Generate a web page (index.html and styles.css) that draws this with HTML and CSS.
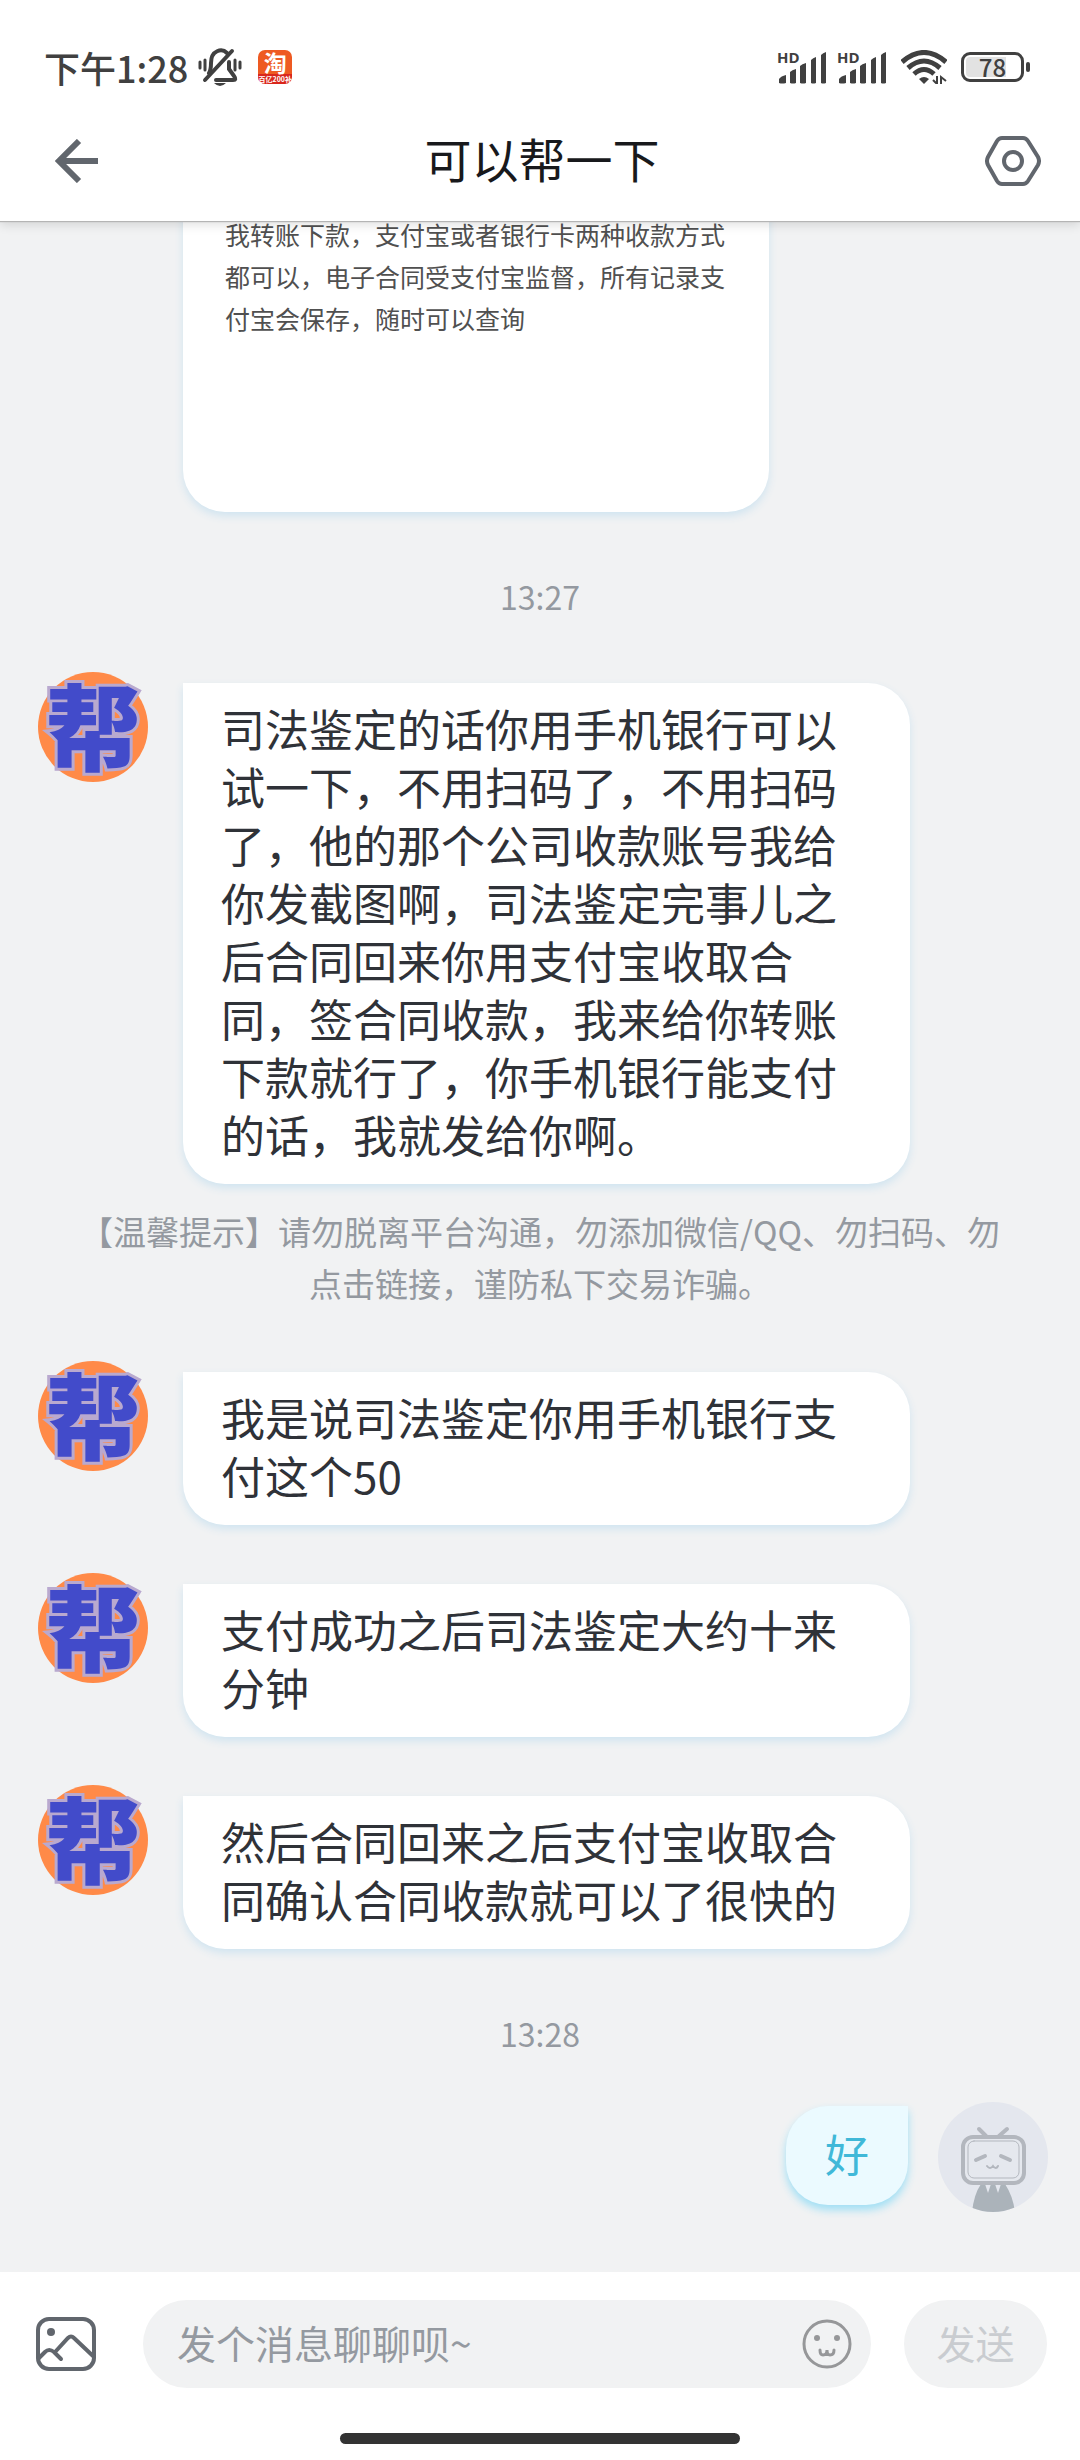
FILE: index.html
```
<!DOCTYPE html>
<html lang="zh-CN">
<head>
<meta charset="utf-8">
<meta name="viewport" content="width=device-width, initial-scale=1">
<title>可以帮一下</title>
<link rel="stylesheet" href="styles.css">
</head>
<body>
<svg class="defs" aria-hidden="true">
  <symbol id="signal" viewBox="0 0 50 34">
    <path d="M2 33V29Q4 26 9 25V33Q5 34 2 33ZM13 33V22Q15 20 19 19V33Q16 34 13 33ZM23 33V16Q25 14 29 13V33Q26 34 23 33ZM34 33V10Q36 8 39 7V33Q36 34 34 33ZM44 33V5Q46 3 49 2V33Q46 34 44 33Z" fill="#404040"/>
  </symbol>
</svg>
<div class="app">
  <header class="top">
    <div class="status">
      <span class="clock">下午1:28</span>
      <svg class="mute" viewBox="0 0 44 38" fill="none" stroke="#404040" stroke-width="4" stroke-linecap="round">
        <path d="M7 32L34 3"/>
        <path d="M11 25Q13 22 13 15C13 2 24 0 29 5"/>
        <path d="M18 32H35Q39 32 36 28L31 21V14"/>
        <path d="M16 35H28Q22 41 16 35Z" fill="#404040" stroke="none"/>
        <path d="M2 14V20M7 12V22M37 12V22M42 14V20" stroke-width="3"/>
      </svg>
      <span class="shop"><b>淘</b><i>百亿200补</i></span>
      <span class="space"></span>
      <span class="sim"><small>HD</small><svg viewBox="0 0 50 34"><use href="#signal"/></svg></span>
      <span class="sim"><small>HD</small><svg viewBox="0 0 50 34"><use href="#signal"/></svg></span>
      <svg class="wifi" viewBox="0 0 46 34" fill="none" stroke="#404040" stroke-width="5">
        <path d="M1 12Q23-7 45 12M7 18Q23 4 39 18M13 24Q23 15 33 24"/>
        <path d="M18 29Q23 25 28 29L23 34Z" fill="#404040" stroke="none"/>
        <path d="M36 26V34L32 30M40 34V27L45 31" stroke-width="2"/>
      </svg>
      <span class="battery"><span class="cell">78</span><span class="tip"></span></span>
    </div>
    <div class="nav">
      <button class="icon-btn" aria-label="返回">
        <svg width="44" height="44" viewBox="0 0 44 44" fill="none" stroke="#61666d" stroke-width="6"><path d="M43 22H4M24 2L4 22L24 42"/></svg>
      </button>
      <h1>可以帮一下</h1>
      <button class="icon-btn" aria-label="设置">
        <svg width="56" height="50" viewBox="0 0 56 50" fill="none" stroke="#61666d" stroke-width="4"><path d="M17 2H38Q41 2 43 5L53 21Q55 25 53 29L43 45Q41 48 38 48H17Q14 48 12 45L3 29Q1 25 3 21L12 5Q14 2 17 2Z"/><circle cx="28" cy="25" r="9"/></svg>
      </button>
    </div>
  </header>

  <main class="chat">
    <article class="card">我转账下款，支付宝或者银行卡两种收款方式都可以，电子合同受支付宝监督，所有记录支付宝会保存，随时可以查询</article>
    <time class="time">13:27</time>
    <div class="msg">
      <span class="avatar">帮</span>
      <p class="bubble">司法鉴定的话你用手机银行可以试一下，不用扫码了，不用扫码了，他的那个公司收款账号我给你发截图啊，司法鉴定完事儿之后合同回来你用支付宝收取合同，签合同收款，我来给你转账下款就行了，你手机银行能支付的话，我就发给你啊。</p>
    </div>
    <p class="notice">【温馨提示】请勿脱离平台沟通，勿添加微信/QQ、勿扫码、勿点击链接，谨防私下交易诈骗。</p>
    <div class="msg">
      <span class="avatar">帮</span>
      <p class="bubble">我是说司法鉴定你用手机银行支付这个50</p>
    </div>
    <div class="msg">
      <span class="avatar">帮</span>
      <p class="bubble">支付成功之后司法鉴定大约十来分钟</p>
    </div>
    <div class="msg">
      <span class="avatar">帮</span>
      <p class="bubble">然后合同回来之后支付宝收取合同确认合同收款就可以了很快的</p>
    </div>
    <time class="time">13:28</time>
    <div class="msg mine">
      <p class="bubble">好</p>
      <svg class="me" viewBox="0 0 110 110" role="img" aria-label="我的头像">
        <defs><clipPath id="disc"><circle cx="55" cy="55" r="55"/></clipPath></defs>
        <g clip-path="url(#disc)">
          <rect width="110" height="110" fill="#e4e7ee"/>
          <path d="M34 110Q36 92 43 82H47L50 91L53 82H57L60 91L63 82H67Q75 94 77 110Z" fill="#abb3ba"/>
          <g fill="none" stroke="#b3b7be" stroke-linecap="round">
            <path d="M41 27L48 34M69 27L61 34" stroke-width="4"/>
            <rect x="25" y="35" width="61" height="46" rx="10" fill="#e5e8ee" stroke-width="4"/>
            <rect x="30" y="39" width="51" height="37" rx="6" stroke-width="1"/>
            <path d="M38 58L47 54M63 54L72 58" stroke-width="4"/>
            <path d="M49 64Q52 68 55 64Q58 68 60 64" stroke-width="2"/>
          </g>
        </g>
      </svg>
    </div>
  </main>

  <footer class="bottom">
    <form class="composer">
      <button type="button" class="icon-btn" aria-label="图片">
        <svg width="60" height="56" viewBox="0 0 60 56" fill="none" stroke="#61666d" stroke-width="4" stroke-linecap="round"><rect x="2" y="3" width="56" height="50" rx="11"/><path d="M3 42L9 36Q13 32 18 36L25 43M20 35L32 22Q35 19 38 22L57 40"/><circle cx="15" cy="16" r="4" fill="#61666d" stroke="none"/></svg>
      </button>
      <div class="field">
        <input type="text" aria-label="消息" placeholder="发个消息聊聊呗~">
        <button type="button" class="icon-btn" aria-label="表情">
          <svg width="50" height="50" viewBox="0 0 50 50" fill="none" stroke="#969799" stroke-width="3" stroke-linecap="round"><circle cx="25" cy="25" r="23"/><path d="M18 31Q18 36 21 36Q25 36 25 31Q25 36 28 36Q32 36 32 31"/><g fill="#969799" stroke="none"><circle cx="15" cy="19" r="3"/><circle cx="35" cy="19" r="3"/></g></svg>
        </button>
      </div>
      <button type="submit" class="send" disabled>发送</button>
    </form>
    <div class="home"></div>
  </footer>
</div>
</body>
</html>
```
FILE: styles.css
```
* { box-sizing: border-box; }
body {
  margin: 0;
  background: #f1f2f3;
  font-family: "Noto Sans CJK SC", sans-serif;
  color: #2f3238;
}
h1, p { margin: 0; font-weight: 400; }
button, input { font: inherit; border: 0; background: none; padding: 0; }
.defs { position: absolute; width: 0; height: 0; }
.app { display: flex; flex-direction: column; min-height: 100vh; }

.top {
  position: relative;
  z-index: 1;
  background: #fff;
  box-shadow: 0 1px 1px #b4b4b4, 0 4px 10px rgba(0, 0, 0, .12);
}
.status {
  display: flex;
  align-items: center;
  gap: 10px;
  height: 100px;
  padding: 34px 50px 0 44px;
  color: #404040;
}
.clock { font-size: 36px; line-height: 64px; font-weight: 500; }
.mute { width: 44px; height: 38px; }
.shop {
  display: flex;
  flex-direction: column;
  align-items: center;
  width: 34px;
  height: 34px;
  margin-left: 6px;
  border-radius: 7px;
  background: linear-gradient(#ee5a22 0 70%, #d9261c 70%);
  color: #fff;
}
.shop b { font-size: 23px; line-height: 25px; }
.shop i { font: 700 7px/8px "Noto Sans CJK SC", sans-serif; white-space: nowrap; }
.space { flex: 1; }
.sim { display: grid; width: 50px; height: 34px; }
.sim small, .sim svg { grid-area: 1 / 1; }
.sim small { font: 700 15px/14px "Open Sans", sans-serif; }
.sim svg { width: 50px; height: 34px; }
.wifi { width: 46px; height: 34px; margin: 0 4px; }
.battery { display: flex; align-items: center; gap: 2px; }
.cell {
  width: 63px;
  height: 30px;
  border: 3px solid #404040;
  border-radius: 9px;
  background: linear-gradient(90deg, #e2e2e2 75%, #fff 75%) content-box;
  padding: 2px;
  font: 500 24px/20px "Noto Sans CJK SC", sans-serif;
  text-align: center;
}
.tip { width: 4px; height: 10px; border-radius: 2px; background: #404040; }

.nav {
  display: flex;
  align-items: center;
  justify-content: space-between;
  height: 121px;
  padding: 0 39px 0 55px;
}
.nav h1 { padding-bottom: 6px; font-size: 47px; line-height: 64px; color: #18191c; }
.icon-btn { display: flex; }

.chat { flex: 1; display: flex; flex-direction: column; }
.card {
  width: 586px;
  height: 299px;
  margin: -8px 0 48px 183px;
  padding: 0 42px;
  border-radius: 0 0 42px 42px;
  background: #fff;
  box-shadow: 0 4px 8px #d0e4f0;
  font-size: 25px;
  line-height: 42px;
  color: #505050;
}
.time {
  margin: 12px 0 52px;
  font-size: 32px;
  line-height: 48px;
  text-align: center;
  color: #9499a0;
}
.msg {
  display: flex;
  align-items: flex-start;
  gap: 35px;
  padding: 0 32px 0 38px;
  margin-bottom: 48px;
}
.avatar {
  flex: none;
  width: 110px;
  height: 110px;
  border-radius: 50%;
  background: #ff8a48;
  color: #424bca;
  font-size: 94px;
  font-weight: 900;
  line-height: 102px;
  text-align: center;
  -webkit-text-stroke: 6px #b9a9cf;
  paint-order: stroke fill;
}
.bubble {
  max-width: 727px;
  margin-top: 11px;
  padding: 16px 38px 21px;
  border-radius: 0 42px 42px 42px;
  background: #fff;
  box-shadow: 0 4px 8px #d0e4f0;
  font-size: 44px;
  line-height: 58px;
}
.notice {
  margin: -27px 76px 52px;
  font-size: 33px;
  line-height: 52px;
  text-align: center;
  color: #9499a0;
}
.mine { justify-content: flex-end; gap: 30px; margin-top: -7px; }
.mine .bubble {
  margin-top: 4px;
  padding: 18px 39px 23px;
  border-radius: 42px 0 42px 42px;
  background: #ebfaff;
  box-shadow: 0 5px 8px #9fdff5;
  color: #40b8d8;
}
.me { flex: none; width: 110px; height: 110px; }

.bottom { background: #fff; padding: 28px 0 16px; }
.composer { display: flex; align-items: center; gap: 33px; height: 88px; padding: 0 33px 0 36px; }
.composer > .icon-btn { margin-right: 14px; }
.field {
  flex: 1;
  display: flex;
  align-items: center;
  height: 88px;
  padding: 0 19px 0 34px;
  border-radius: 44px;
  background: #f1f2f3;
}
.field input { flex: 1; min-width: 0; padding-bottom: 4px; font-size: 39px; line-height: 56px; outline: 0; }
.field input::placeholder { color: #9499a0; opacity: 1; }
.send {
  width: 143px;
  height: 88px;
  padding-bottom: 4px;
  border-radius: 44px;
  background: #f1f2f3;
  font-size: 39px;
  color: #c9ccd0;
}
.home {
  width: 37%;
  height: 11px;
  margin: 45px auto 0;
  border-radius: 6px;
  background: #333;
}
```
